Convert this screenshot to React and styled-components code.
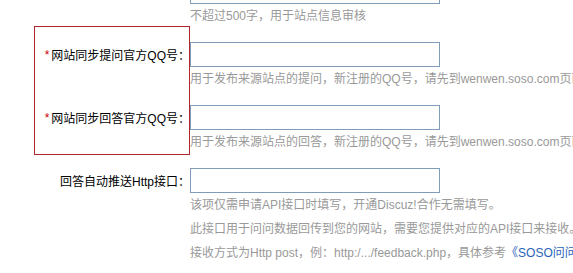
import React from 'react';
import styled, { createGlobalStyle } from 'styled-components';

const GlobalStyle = createGlobalStyle`
  html, body {
    margin: 0;
    padding: 0;
    background: #fff;
    overflow: hidden;
  }
  body {
    font-family: "Liberation Sans", "Noto Sans CJK SC", sans-serif;
    font-size: 12px;
  }
`;

// Form is shifted up so only the tail of the previous row shows
const Form = styled.div`
  margin-top: -35px;
  width: 900px;
`;

const Row = styled.div`
  display: grid;
  grid-template-columns: 190px 1fr;
  padding-top: 14px;
`;

const Label = styled.label`
  height: 25px;
  display: flex;
  align-items: center;
  justify-content: flex-end;
  color: #000;
  white-space: nowrap;
`;

const Star = styled.span`
  color: #c00;
  margin-right: 2px;
`;

const Field = styled.div`
  display: flex;
  flex-direction: column;
`;

const Input = styled.input`
  box-sizing: border-box;
  width: 250px;
  height: 25px;
  margin: 0;
  padding: 0 4px;
  border: 1px solid #7f9db9;
  font: inherit;
  outline: none;
`;

const Help = styled.div`
  line-height: 24px;
  color: #999;
  white-space: nowrap;
`;

const Link = styled.a`
  color: #2a64b8;
  text-decoration: none;
`;

// annotation box drawn over the label column of the grouped rows
const Highlight = styled.div`
  position: relative;

  &::after {
    content: '';
    position: absolute;
    left: 34px;
    top: -2px;
    bottom: -1px;
    width: 154px;
    border: 1px solid #b3242b;
    pointer-events: none;
  }
`;

const FormRow = ({ label, required, children }) => (
  <Row>
    <Label>
      {required && <Star>*</Star>}
      {label}
    </Label>
    <Field>
      <Input type="text" />
      {children}
    </Field>
  </Row>
);

export default function App() {
  return (
    <>
      <GlobalStyle />
      <Form>
        <Row>
          <Label />
          <Field>
            <Input type="text" />
            <Help>不超过500字，用于站点信息审核</Help>
          </Field>
        </Row>
        <Highlight>
          <FormRow label="网站同步提问官方QQ号：" required>
            <Help>用于发布来源站点的提问，新注册的QQ号，请先到wenwen.soso.com页面进行激活</Help>
          </FormRow>
          <FormRow label="网站同步回答官方QQ号：" required>
            <Help>用于发布来源站点的回答，新注册的QQ号，请先到wenwen.soso.com页面进行激活</Help>
          </FormRow>
        </Highlight>
        <FormRow label="回答自动推送Http接口：">
          <Help>该项仅需申请API接口时填写，开通Discuz!合作无需填写。</Help>
          <Help>此接口用于问问数据回传到您的网站，需要您提供对应的API接口来接收。</Help>
          <Help>
            接收方式为Http post，例：http:/.../feedback.php，具体参考
            <Link href="#">《SOSO问问API接口文档》</Link>
          </Help>
        </FormRow>
      </Form>
    </>
  );
}
